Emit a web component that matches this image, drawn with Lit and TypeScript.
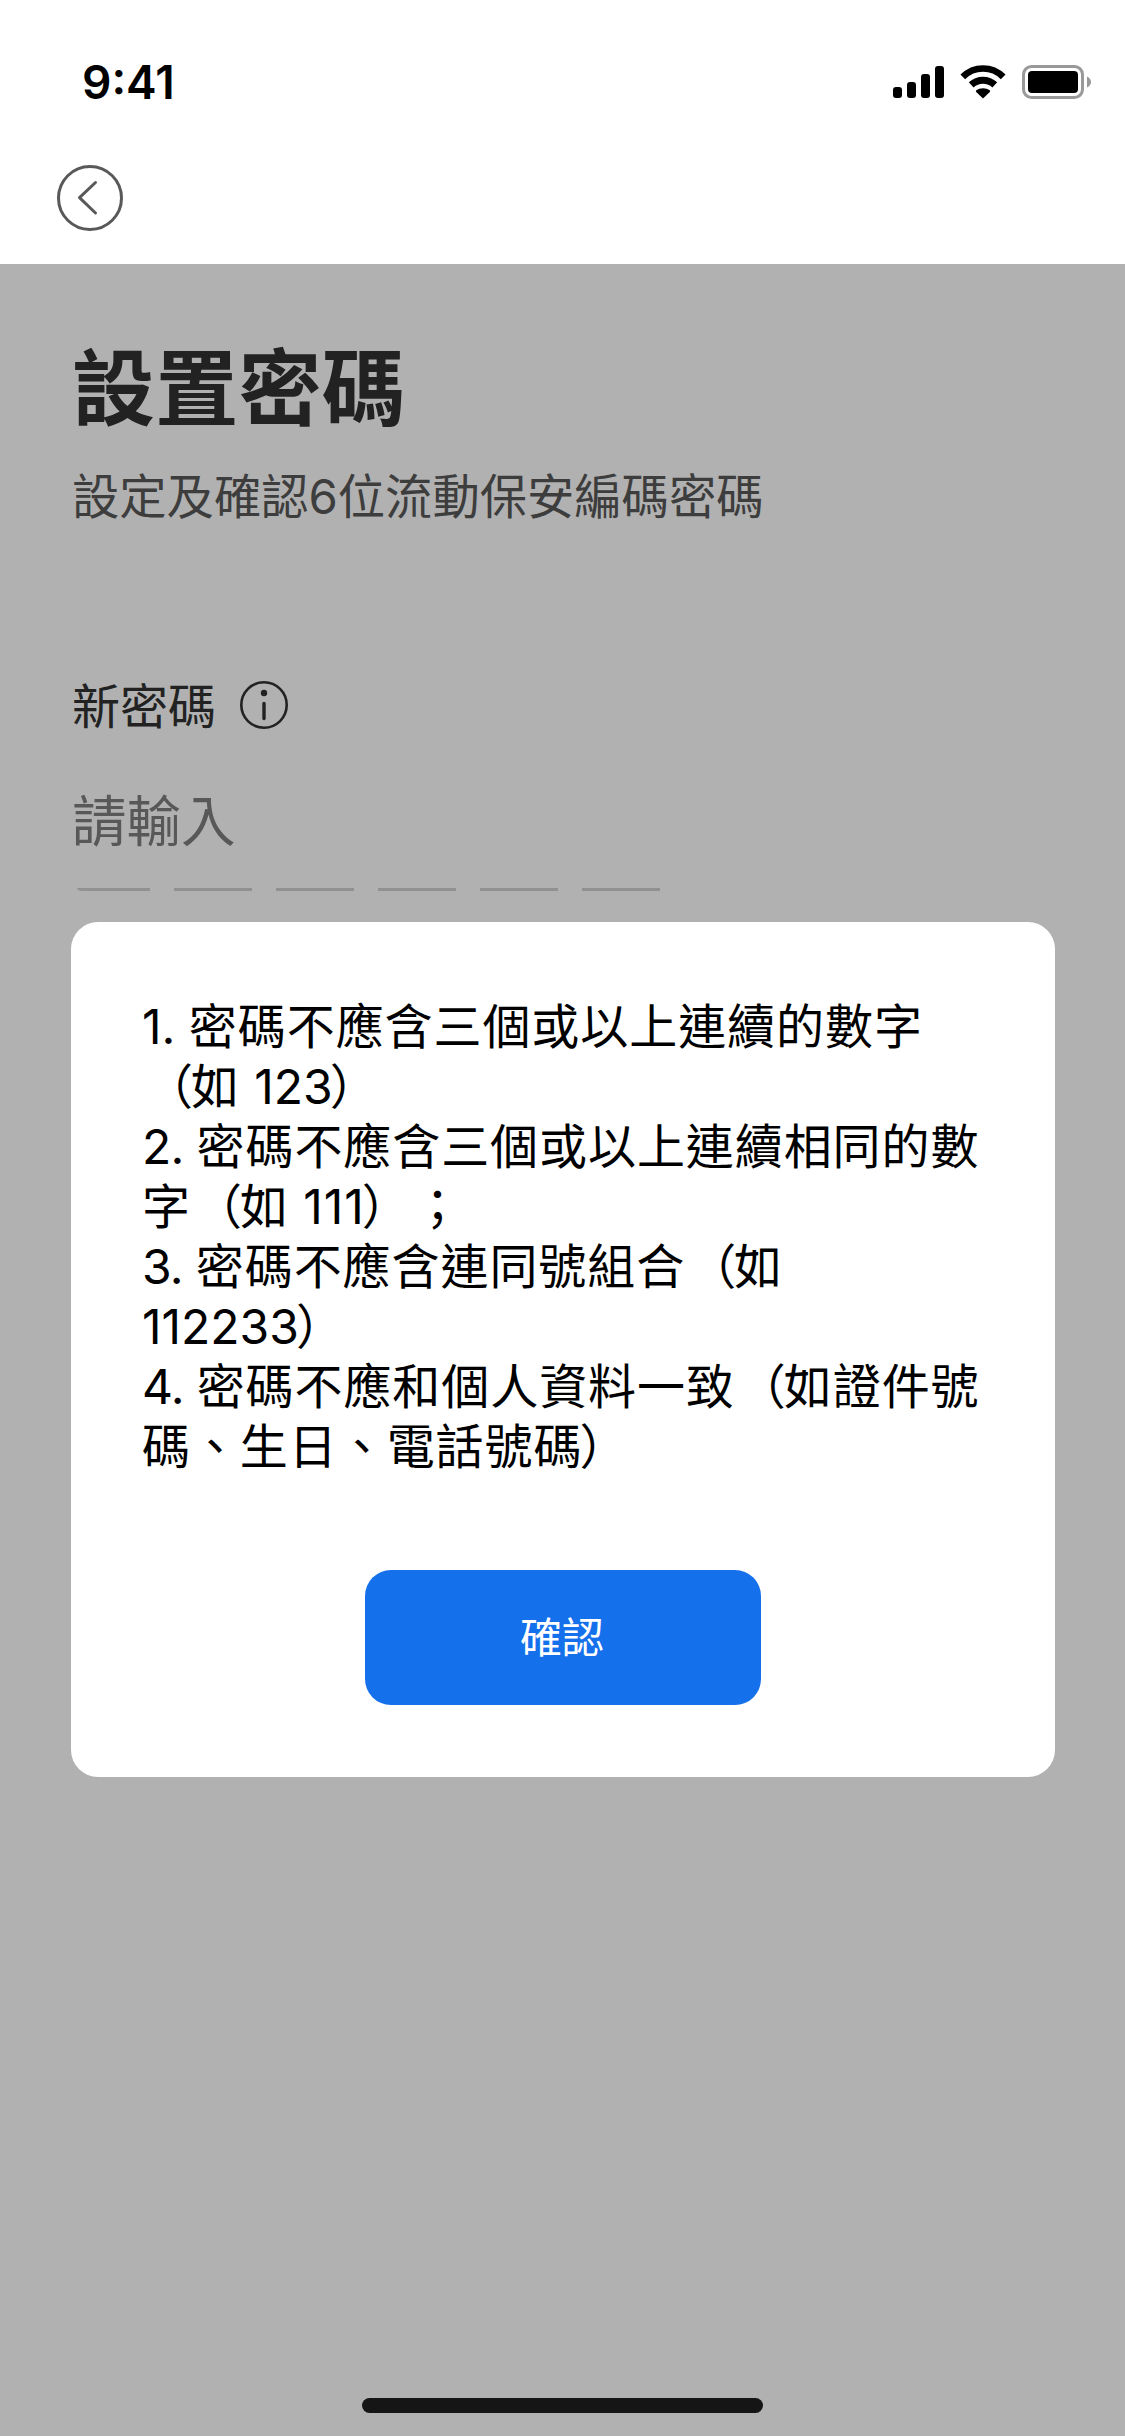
import { LitElement, html, css, svg } from "lit";
import { customElement } from "lit/decorators.js";

const RULE_LINES = [
  "1. 密碼不應含三個或以上連續的數字",
  "（如 123）",
  "2. 密碼不應含三個或以上連續相同的數",
  "字（如 111）；",
  "3. 密碼不應含連同號組合（如",
  "112233）",
  "4. 密碼不應和個人資料一致（如證件號",
  "碼、生日、電話號碼）",
];

const BARS = [
  { x: 0, y: 21, h: 11 },
  { x: 14, y: 16, h: 16 },
  { x: 28, y: 8, h: 24 },
  { x: 42, y: 0, h: 32 },
];

/** Class of a text run: numbering, digits, full-width brackets or plain text. */
function runClass(run: string): string {
  if (run === "（") return "open";
  if (run === "）") return "close";
  if (run === "1. ") return "digits";
  if (/^\d\. $/.test(run)) return "number";
  if (/^\d+$/.test(run) && run !== "111") return "digits";
  return "";
}

function renderRuns(text: string) {
  return text
    .split(/(\d\. |\d+|（|）)/)
    .filter((run) => run)
    .map((run) => html`<span class=${runClass(run)}>${run}</span>`);
}

@customElement("status-bar")
class StatusBar extends LitElement {
  static styles = css`
    :host {
      display: flex;
      height: 132px;
      box-sizing: border-box;
      padding: 52px 33px 0 82px;
      justify-content: space-between;
      align-items: flex-start;
    }
    .time {
      font: 600 46px/60px Inter, sans-serif;
      color: #000;
    }
    .icons {
      display: flex;
      padding-top: 12px;
    }
    .signal { margin: 2px 16px 0 0; }
    .wifi { margin: 0 16px 0 0; }
    svg { display: block; }
  `;

  render() {
    return html`
      <span class="time">9:41</span>
      <div class="icons">
        <svg class="signal" width="51" height="32" viewBox="0 0 51 32">
          ${BARS.map((b) => svg`<rect x=${b.x} y=${b.y} width="9" height=${b.h} rx="3"></rect>`)}
        </svg>
        <svg class="wifi" width="46" height="36" viewBox="960 64 46 36">
          <g fill="none" stroke="#000">
            <path stroke-width="6.6" d="M962.8 76.9A28.4 28.4 0 0 1 1003.2 76.9" />
            <path stroke-width="7" d="M971.2 84.9A17.2 17.2 0 0 1 994.8 84.9" />
          </g>
          <path d="M983 88.2c2.500 0 5 .8 6.700 2.100q.9.800.1 1.700L983 98.500L976.200 92q-.8-.9.1-1.700C978 89 980.500 88.200 983 88.200Z" />
        </svg>
        <svg class="battery" width="70" height="36" viewBox="1022 64 70 36">
          <rect x="1023.500" y="66.500" width="59" height="31" rx="8" fill="none" stroke="#999" stroke-width="3" />
          <rect x="1028" y="71" width="50" height="22" rx="4" />
          <path d="M1087 76.500c2.500 1 4 3 4 5.500s-1.500 4.500-4 5.500Z" fill="#999" />
        </svg>
      </div>
    `;
  }
}

@customElement("app-root")
class AppRoot extends LitElement {
  static styles = css`
    :host {
      display: flex;
      flex-direction: column;
      width: 1125px;
      height: 2436px;
      background: #b1b1b1;
      font-family: Inter, "Noto Sans CJK TC", sans-serif;
      text-spacing-trim: space-all;
      white-space: nowrap;
    }
    svg { display: block; }
    .header {
      height: 264px;
      background: #fff;
      flex: none;
    }
    .back {
      display: block;
      margin: 0 0 0 56px;
      padding: 0;
      border: 0;
      background: none;
    }
    .form {
      height: 658px;
      box-sizing: border-box;
      padding: 75px 72px 0;
      flex: none;
    }
    .title {
      margin: 0;
      font-size: 83px;
      font-weight: 700;
      line-height: 100px;
      letter-spacing: 0.3px;
      color: #222;
    }
    .subtitle {
      margin: 28px 0 0;
      font-size: 47.3px;
      line-height: 60px;
      color: #3d3d3d;
    }
    .label {
      display: flex;
      align-items: center;
      gap: 24px;
      margin-top: 148px;
      font-size: 48px;
      line-height: 60px;
      color: #222;
    }
    .label span { padding-top: 2px; margin-bottom: -2px; }
    .placeholder {
      margin-top: 51px;
      font-size: 54.5px;
      line-height: 70px;
      color: #585858;
    }
    .slots {
      display: flex;
      gap: 24px;
      margin-top: 32px;
    }
    .slot {
      width: 78px;
      height: 3px;
      background: #919191;
    }
    .slot:first-child {
      box-sizing: border-box;
      width: 73px;
      margin-left: 5px;
      border-bottom-left-radius: 5px 3px;
    }
    .dialog {
      display: flex;
      flex-direction: column;
      align-items: center;
      box-sizing: border-box;
      width: 984px;
      height: 855px;
      flex: none;
      margin-left: 71px;
      padding: 75px 71px 0;
      border-radius: 27px;
      background: #fff;
    }
    .rules {
      align-self: stretch;
      font-size: 48px;
      line-height: 60px;
      letter-spacing: 0.93px;
      color: #000;
    }
    .line {
      height: 60px;
      white-space: pre;
    }
    .digits { letter-spacing: 0; }
    .number { letter-spacing: -0.7px; }
    .open { margin: 0 -3px 0 3px; }
    .close { margin: 0 3px 0 -3px; }
    .confirm {
      width: 396px;
      height: 135px;
      margin: 93px 0 0 0;
      padding: 0 2px 0 0;
      border: 0;
      border-radius: 26px;
      background: #1570ec;
      color: #fff;
      font-family: inherit;
      font-size: 42px;
      line-height: 60px;
    }
    .home {
      width: 401px;
      height: 15px;
      margin: auto auto 23px;
      border-radius: 8px;
      background: #151515;
    }
  `;

  render() {
    return html`
      <header class="header">
        <status-bar></status-bar>
        <button class="back" aria-label="返回">
          <svg width="68" height="132" viewBox="0 0 68 132" fill="none" stroke="#595959" stroke-width="3">
            <circle cx="34" cy="66" r="31.500" />
            <path d="M39.500 50.500L23.500 65.700L39.500 81" stroke-linecap="round" stroke-linejoin="round" />
          </svg>
        </button>
      </header>
      <section class="form">
        <h1 class="title">設置密碼</h1>
        <p class="subtitle">設定及確認6位流動保安編碼密碼</p>
        <div class="label">
          <span>新密碼</span>
          <svg width="48" height="48" viewBox="0 0 48 48">
            <circle cx="24" cy="24" r="22.700" fill="none" stroke="#222" stroke-width="2.600" />
            <circle cx="24" cy="12" r="3.200" fill="#222" />
            <path d="M24 22.500V37.500" stroke="#222" stroke-width="3.400" stroke-linecap="round" />
          </svg>
        </div>
        <div class="placeholder">請輸入</div>
        <div class="slots">${[0, 1, 2, 3, 4, 5].map(() => html`<i class="slot"></i>`)}</div>
      </section>
      <section class="dialog" role="dialog">
        <div class="rules">${RULE_LINES.map((t) => html`<div class="line">${renderRuns(t)}</div>`)}</div>
        <button class="confirm">確認</button>
      </section>
      <div class="home"></div>
    `;
  }
}
